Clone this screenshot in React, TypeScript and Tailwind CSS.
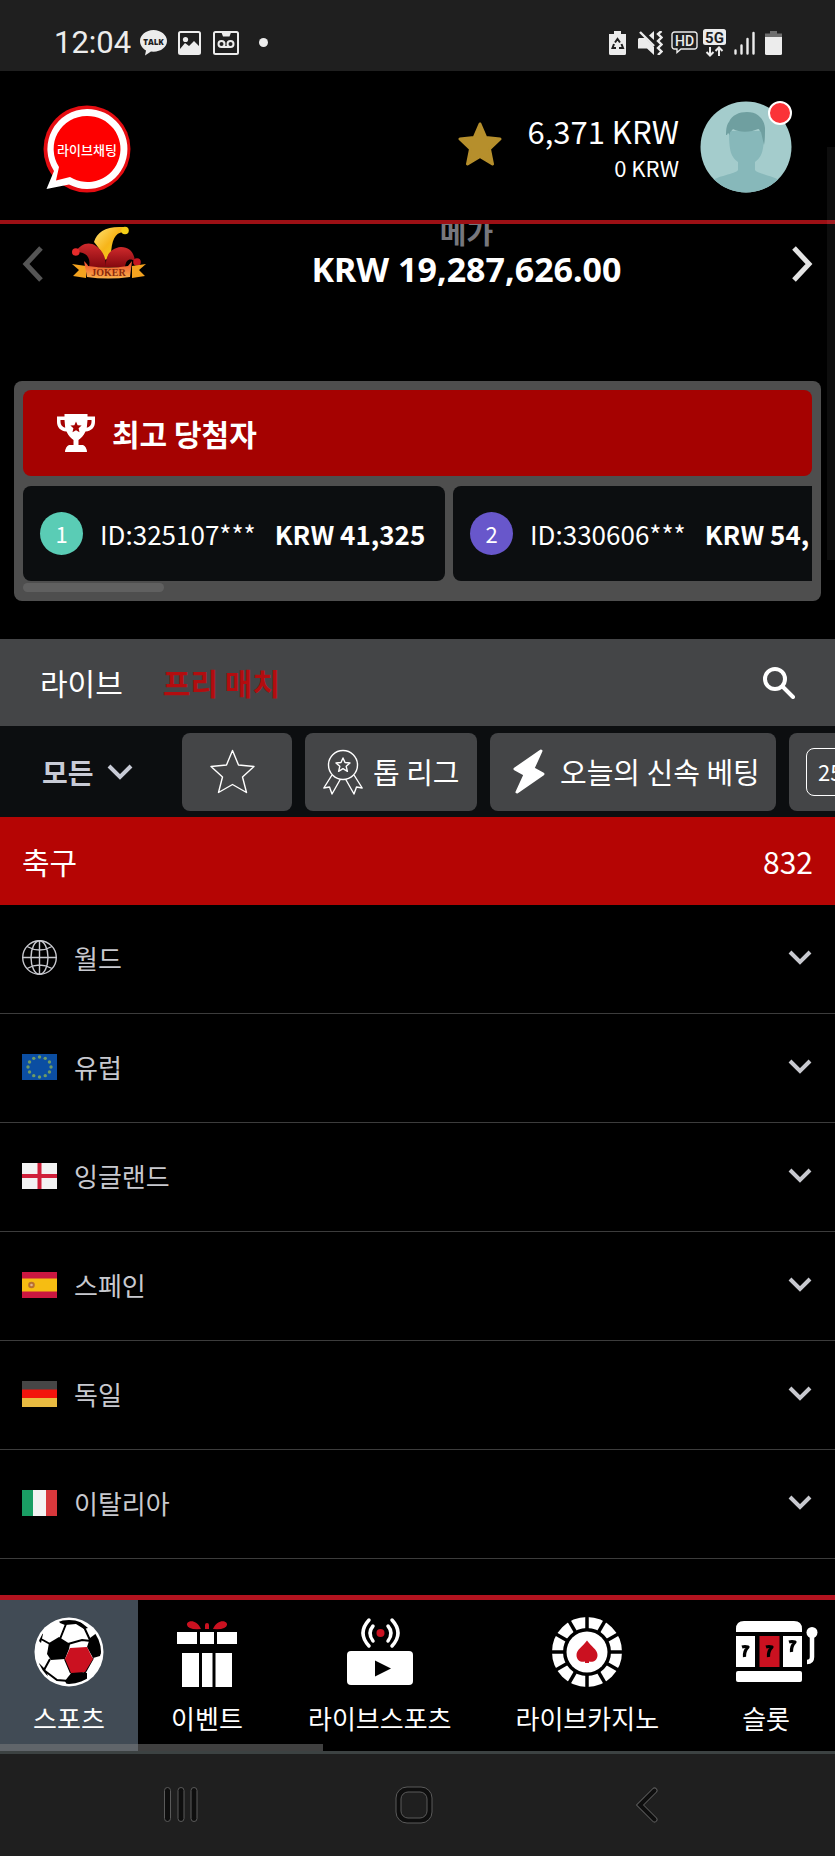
import { useState, type ReactNode } from 'react';

type Winner = { rank: number; id: string; amount: string; badge: string };

const winners: Winner[] = [
  { rank: 1, id: 'ID:325107***', amount: 'KRW 41,325', badge: 'bg-[#5accb5]' },
  { rank: 2, id: 'ID:330606***', amount: 'KRW 54,', badge: 'bg-[#6857cb]' },
];

/* ---------- Status bar ---------- */

function StatusBar() {
  return (
    <div className="flex h-[71px] shrink-0 items-center justify-between bg-[#1f1f1f] pt-[14px] pr-[53px] pl-[54px] text-[#ececec]">
      <div className="flex items-center">
        <span className="font-[Roboto,sans-serif] text-[31px] leading-8">12:04</span>
        <svg className="ml-[9px] h-[26px] w-[27px]" viewBox="0 0 27 26">
          <path d="M13.500 0C6 0 0 5 0 11c0 4 2.600 7.500 6 9.500L5 25.500l6-4 2.500.2C21 21.700 27 17 27 11S21 0 13.500 0Z" fill="#ececec" />
          <text x="13.500" y="14.500" textAnchor="middle" fontFamily="Open Sans, sans-serif" fontSize="8" fontWeight="800" fill="#1f1f1f">TALK</text>
        </svg>
        <svg className="ml-[11px] h-6 w-[23px]" viewBox="0 0 23 24">
          <rect x="1" y="1" width="21" height="22" rx="1.500" fill="none" stroke="#ececec" strokeWidth="2" />
          <circle cx="7.500" cy="8.500" r="2.600" fill="#ececec" />
          <path d="M2 18l5-6 4 3 5-5 6 6v6H2Z" fill="#ececec" />
        </svg>
        <svg className="ml-3 h-6 w-[26px]" viewBox="0 0 26 24" fill="none" stroke="#ececec" strokeWidth="2">
          <rect x="1" y="1" width="24" height="22" rx="1.500" />
          <path d="M8.500 1.500l1.500 4h6.500l1.500-4Z" fill="#ececec" stroke="none" />
          <circle cx="8.500" cy="13" r="3" />
          <circle cx="17.500" cy="13" r="3" />
          <path d="M8.500 16h9" />
        </svg>
        <span className="ml-5 size-[9px] rounded-full bg-[#ececec]" />
      </div>

      <div className="flex items-center">
        <svg className="h-6 w-[17px]" viewBox="0 0 17 24">
          <path d="M5 0h7v3h5v19.500a1.500 1.500 0 0 1-1.500 1.500h-14A1.500 1.500 0 0 1 0 22.500V3h5Z" fill="#ececec" />
          <path d="M6 11.500L8.500 8l2.500 3.500M12.500 13l1.500 4h-4M7 17H3.500l1.500-4" fill="none" stroke="#1f1f1f" strokeWidth="2" />
        </svg>
        <svg className="ml-3 h-6 w-[25px]" viewBox="0 0 25 24">
          <path d="M1 7h6l9 9v8l-7-6.500H0V8Z" fill="#ececec" />
          <path d="M2 1l14 14" stroke="#ececec" strokeWidth="2.400" />
          <path d="M11 4.500L16 0v9Z" fill="#ececec" />
          <path d="M23.500 0L20 3l3.500 3.500L20 10l3.500 3.500L20 17l3.500 3.500L20 24" fill="none" stroke="#ececec" strokeWidth="2.400" />
        </svg>
        <svg className="ml-2 h-[23px] w-[27px]" viewBox="0 0 27 23">
          <path d="M3.500 1h20a2.500 2.500 0 0 1 2.500 2.500v12a2.500 2.500 0 0 1-2.500 2.500H10l-4 3.500V18H3.500A2.500 2.500 0 0 1 1 15.500v-12A2.500 2.500 0 0 1 3.500 1Z" fill="none" stroke="#ececec" strokeWidth="1.400" />
          <text x="13.500" y="14.500" textAnchor="middle" fontFamily="Roboto, sans-serif" fontSize="14" fontWeight="500" fill="#ececec">HD</text>
        </svg>
        <svg className="ml-[5px] h-7 w-[23px]" viewBox="0 0 23 28">
          <rect width="23" height="16" rx="2.500" fill="#ececec" />
          <text x="11.500" y="13.500" textAnchor="middle" fontFamily="Roboto, sans-serif" fontSize="15" fontWeight="700" fill="#1f1f1f">5G</text>
          <path d="M7 18v8M3.500 23L7 26.500l3.500-3.500M16 27v-8M12.500 22L16 18.500l3.500 3.500" fill="none" stroke="#ececec" strokeWidth="2" />
        </svg>
        <svg className="ml-2 h-6 w-[21px]" viewBox="0 0 21 24" stroke="#ececec" strokeWidth="2.400" strokeLinecap="round">
          <path d="M1.500 19.500v3M7.500 14.500v8M13.500 8v14.500M19.500 2v20.500" />
        </svg>
        <svg className="ml-[10px] h-6 w-[17px]" viewBox="0 0 17 24">
          <path d="M5 0h7v2.500h5V6H0V2.500h5Z" fill="#6e6e6e" />
          <path d="M0 6h17v16.500a1.500 1.500 0 0 1-1.500 1.500h-14A1.500 1.500 0 0 1 0 22.500Z" fill="#ececec" />
        </svg>
      </div>
    </div>
  );
}

/* ---------- Header ---------- */

function Header() {
  return (
    <header className="flex h-[153px] shrink-0 items-center justify-between border-b-4 border-[#9c1015] px-[43px] pt-[2px]">
      <button aria-label="라이브채팅" className="mt-1">
        <svg className="size-[88px]" viewBox="0 0 88 88">
          <circle cx="44" cy="44" r="43.500" fill="#e60d12" />
          <path d="M44 4a40 40 0 1 1-18 75.500L3.500 84 11 66A40 40 0 0 1 44 4Z" fill="#fff" />
          <path d="M44 11a33 33 0 1 1-17 61l-14 3.500L16 62A33 33 0 0 1 44 11Z" fill="#fe0000" />
          <text x="44" y="50" textAnchor="middle" fontFamily="Noto Sans CJK KR, sans-serif" fontSize="13" fontWeight="500" fill="#fff">라이브채팅</text>
        </svg>
      </button>

      <div className="flex items-center">
        <button aria-label="즐겨찾기" className="mb-1.5">
          <svg className="size-11" viewBox="0 0 44 44">
            <path d="M22 2l5.800 13.500L42 17 31.500 27l3 15L22 34.500 9.500 42l3-15L2 17l14.200-1.500Z" fill="#b68f2c" stroke="#b68f2c" strokeWidth="3" strokeLinejoin="round" />
          </svg>
        </button>
        <div className="ml-[25px] text-right text-white">
          <p className="text-[31px] leading-10">6,371 KRW</p>
          <p className="text-[22px] leading-8">0 KRW</p>
        </div>
        <button aria-label="프로필" className="relative ml-[21px]">
          <svg className="size-[92px]" viewBox="0 0 92 92">
            <clipPath id="avatar">
              <circle cx="46" cy="46" r="45.500" />
            </clipPath>
            <g clipPath="url(#avatar)">
              <rect width="92" height="92" fill="#a4cccc" />
              <path d="M29 30c0 20 2 26 9 31v8c-2 4-22 6-28 12v12h72V81c-6-6-25-8-27-12v-8c7-5 9-11 9-31Z" fill="#87b8ba" />
              <path d="M26 34c0-7 1-11 3-13 3-7 10-10 18-10 11 0 17 7 18 16 0 6 0 13-1 17l-3-13c-2-1-1-3-3-3-6 3-18 4-25 0-2 3-4 3-3 6l-2-2c-1 2-1 2-2 2Z" fill="#6f9fa0" />
            </g>
          </svg>
          <span className="absolute top-0 right-0 size-6 rounded-full border-2 border-white bg-[#fb3338]" />
        </button>
      </div>
    </header>
  );
}

/* ---------- Jackpot carousel ---------- */

function JokerLogo() {
  return (
    <svg className="h-[54px] w-[74px]" viewBox="0 0 74 54">
      <defs>
        <linearGradient id="jokerGold" x1="0" y1="0" x2="1" y2="1">
          <stop offset="0" stopColor="#ffe477" />
          <stop offset=".5" stopColor="#f7b51a" />
          <stop offset="1" stopColor="#f0dc1c" />
        </linearGradient>
        <linearGradient id="jokerRed" x1="0" y1="0" x2="0" y2="1">
          <stop offset="0" stopColor="#cf2a2c" />
          <stop offset="1" stopColor="#85080f" />
        </linearGradient>
        <linearGradient id="jokerRibbon" x1="0" y1="0" x2="0" y2="1">
          <stop offset="0" stopColor="#ef4a2b" />
          <stop offset="1" stopColor="#f9b04a" />
        </linearGradient>
      </defs>
      <path d="M32 34C30 26 26 21 22 16 25 6 34 0 51 1v5c-8 1-12 8-12 26Z" fill="url(#jokerGold)" />
      <circle cx="53" cy="4.500" r="3.800" fill="#f3cf17" />
      <path d="M4 26c4-8 13-11 20-6 6 4 10 10 10 21H17c2-9-2-15-13-15Z" fill="url(#jokerRed)" />
      <path d="M34 41c-1-12 5-19 15-20 9 0 13 6 14 14-5-3-9-2-10 6Z" fill="url(#jokerRed)" />
      <circle cx="3.800" cy="26" r="3.800" fill="#e52b2b" />
      <circle cx="65" cy="36" r="3.800" fill="#c71720" />
      <path d="M0 38l14 2v12L1 50l6-6ZM74 38l-14 2v12l13-2-6-6Z" fill="#f4a31f" />
      <path d="M12 35q4 4 4 5 21 3 40 0l4-5-2 16q-22 3-43 0Z" fill="url(#jokerRibbon)" />
      <text x="36.500" y="50" textAnchor="middle" fontFamily="Liberation Serif, serif" fontSize="10" fontWeight="700" fill="#8a2a0c">JOKER</text>
    </svg>
  );
}

function Jackpot() {
  return (
    <section className="flex h-[157px] items-start px-[22px]">
      <button aria-label="이전" className="mt-[22px] text-[#555]">
        <svg className="h-9 w-[22px]" viewBox="0 0 22 36" fill="none" stroke="currentColor" strokeWidth="5">
          <path d="M19 2L4 18l15 16" />
        </svg>
      </button>
      <div className="ml-7 mt-[2px]">
        <JokerLogo />
      </div>
      <div className="-mt-[11px] flex-1 pr-1 text-center font-bold">
        <p className="text-[29px] leading-9 text-[#77777d]">메가</p>
        <p className="font-['Noto_Sans',sans-serif] text-[34px] leading-10 text-white">KRW 19,287,626.00</p>
      </div>
      <button aria-label="다음" className="mt-[22px] text-[#e4e4e4]">
        <svg className="h-9 w-[22px]" viewBox="0 0 22 36" fill="none" stroke="currentColor" strokeWidth="5">
          <path d="M3 2l15 16L3 34" />
        </svg>
      </button>
    </section>
  );
}

/* ---------- Top winners ---------- */

function TopWinners() {
  return (
    <section className="mx-[14px] rounded-lg bg-[#4e4e4e] p-[9px]">
      <h2 className="flex h-[86px] items-center rounded-lg bg-[#a50201] pl-[34px] text-[30px] font-bold text-white">
        <svg className="h-[38px] w-[38px]" viewBox="0 0 38 38">
          <path d="M7.500 0h23v2.500H38V8c0 5-3 9-9.500 9.500C26.500 22 24 24 21.500 26v5h4.500q3.500 1.500 4 7H8q.5-5.500 4-7h4.500v-5C14 24 11.500 22 9.500 17.500 3 17 0 13 0 8V2.500h7.500ZM3.500 6v2c0 3 2 5 4.700 5.700L7.500 6Zm31 0h-4l-.7 7.700C32.500 13 34.500 11 34.500 8Z" fill="#fff" fillRule="evenodd" />
          <path d="M19 7.500l1.600 3.700 4 .3-3 2.700.9 4-3.500-2-3.500 2 .9-4-3-2.700 4-.3Z" fill="#a50201" />
        </svg>
        <span className="ml-[17px]">최고 당첨자</span>
      </h2>
      <ul className="mt-[10px] flex gap-2 overflow-hidden">
        {winners.map((w) => (
          <li key={w.rank} className="flex h-[95px] w-[422px] shrink-0 items-center rounded-lg bg-[#0c0e10] pl-[17px] whitespace-nowrap text-white">
            <span className={`flex size-[43px] items-center justify-center rounded-full text-[22px] ${w.badge}`}>{w.rank}</span>
            <span className="ml-[17px] text-[26px]">{w.id}</span>
            <span className="ml-[19px] text-[26px] font-bold">{w.amount}</span>
          </li>
        ))}
      </ul>
      <div className="mt-[2px] h-[9px] w-[141px] rounded-full bg-[#606060]" />
    </section>
  );
}

/* ---------- Match tabs and filters ---------- */

function MatchTabs() {
  const [tab, setTab] = useState<'live' | 'prematch'>('prematch');
  return (
    <div className="mt-[38px] flex h-[87px] items-center bg-[#444547] pr-10 pl-10 text-[30px]">
      <button onClick={() => setTab('live')} className={tab === 'live' ? 'font-bold text-[#b30d0f]' : 'text-white'}>
        라이브
      </button>
      <button onClick={() => setTab('prematch')} className={`ml-10 ${tab === 'prematch' ? 'font-bold text-[#b30d0f]' : 'text-white'}`}>
        프리 매치
      </button>
      <button aria-label="검색" className="ml-auto">
        <svg className="size-8" viewBox="0 0 32 32" fill="none" stroke="#fff">
          <circle cx="12" cy="12" r="10" strokeWidth="4" />
          <path d="M19.500 19.500L30 30" strokeWidth="4" strokeLinecap="round" />
        </svg>
      </button>
    </div>
  );
}

function Chip({ children, className = '', label }: { children: ReactNode; className?: string; label?: string }) {
  return (
    <button aria-label={label} className={`flex h-[78px] shrink-0 items-center rounded-lg bg-[#444547] text-[29px] whitespace-nowrap text-white ${className}`}>
      {children}
    </button>
  );
}

function Filters() {
  return (
    <div className="flex h-[91px] items-center gap-[13px] overflow-hidden bg-[#0c0e10] pl-[42px]">
      <button className="flex w-[127px] shrink-0 items-center text-[28px] font-bold text-[#c8cbd6]">
        모든
        <svg className="ml-[13px] h-4 w-[26px]" viewBox="0 0 26 16" fill="none" stroke="currentColor" strokeWidth="4">
          <path d="M2 2l11 11L24 2" />
        </svg>
      </button>
      <Chip label="즐겨찾기" className="w-[110px] pl-7">
        <svg className="size-[45px]" viewBox="0 0 45 45" fill="none" stroke="#fff" strokeWidth="1.400" strokeLinejoin="round">
          <path d="M22.500 1.500l6 14.500 15.500 1.500-11.500 10.500 4 15.500-14-8-14 8 4-15.500L1 17.500 16.500 16Z" />
        </svg>
      </Chip>
      <Chip className="w-[172px] pl-[18px]">
        <svg className="h-[46px] w-10" viewBox="0 0 40 46" fill="none" stroke="#fff" strokeWidth="1.400" strokeLinejoin="round">
          <circle cx="20" cy="16" r="14.500" />
          <path d="M20 9l2 4.500 5 .5-3.800 3.300 1.200 5L20 19.700l-4.400 2.600 1.200-5L13 14l5-.5Z" />
          <path d="M9 26L.800 39l5.700-1 2.500 7 8.500-15M31 26l8.200 13-5.700-1-2.500 7-8.500-15" />
        </svg>
        <span className="ml-[10px]">톱 리그</span>
      </Chip>
      <Chip className="w-[286px] pl-[23px]">
        <svg className="h-[45px] w-8" viewBox="0 0 32 45" fill="#fff" stroke="#fff" strokeWidth="3" strokeLinejoin="round">
          <path d="M28 2L2 20l10 5.500L4 43l26-18-10-5.500Z" />
        </svg>
        <span className="ml-[15px]">오늘의 신속 베팅</span>
      </Chip>
      <Chip className="w-[180px] pl-[17px]">
        <span className="flex h-12 w-[66px] items-center rounded-lg border border-white pl-[11px] text-[22px]">25</span>
      </Chip>
    </div>
  );
}

/* ---------- Country list ---------- */

function Globe() {
  return (
    <svg className="size-[35px]" viewBox="0 0 35 35" fill="none" stroke="#c8c9cf" strokeWidth="1.400">
      <circle cx="17.500" cy="17.500" r="16.800" />
      <ellipse cx="17.500" cy="17.500" rx="8.500" ry="16.800" />
      <path d="M17.500.700v33.600M.700 17.500h33.600M5 6.500q12.500 7 25 0M5 28.500q12.500-7 25 0" />
    </svg>
  );
}

function Flag({ children }: { children: ReactNode }) {
  return (
    <svg className="h-[26px] w-[35px]" viewBox="0 0 35 26">
      {children}
    </svg>
  );
}

const euStars = Array.from({ length: 12 }, (_, i) => {
  const a = (i * Math.PI) / 6;
  return { x: 17.5 + 11.5 * Math.sin(a), y: 13 - 10 * Math.cos(a) };
});

const countries: { name: string; icon: ReactNode }[] = [
  { name: '월드', icon: <Globe /> },
  {
    name: '유럽',
    icon: (
      <Flag>
        <rect width="35" height="26" fill="#0b4ea2" />
        {euStars.map((s) => (
          <circle key={`${s.x}-${s.y}`} cx={s.x} cy={s.y} r="1.700" fill="#6f9c66" />
        ))}
      </Flag>
    ),
  },
  {
    name: '잉글랜드',
    icon: (
      <Flag>
        <rect width="35" height="26" fill="#f3f3f3" />
        <path d="M15.500 0h4v26h-4ZM0 11h35v4H0Z" fill="#d0203a" />
      </Flag>
    ),
  },
  {
    name: '스페인',
    icon: (
      <Flag>
        <rect width="35" height="26" fill="#cb1740" />
        <rect y="6.500" width="35" height="13" fill="#f6bd12" />
        <circle cx="9.500" cy="13" r="3.300" fill="#b8702f" />
        <circle cx="9.500" cy="13" r="1.300" fill="#e0b48a" />
      </Flag>
    ),
  },
  {
    name: '독일',
    icon: (
      <Flag>
        <rect width="35" height="9" fill="#464646" />
        <rect y="8.500" width="35" height="9" fill="#f3130c" />
        <rect y="17" width="35" height="9" fill="#e9bb41" />
      </Flag>
    ),
  },
  {
    name: '이탈리아',
    icon: (
      <Flag>
        <rect width="11" height="26" fill="#1a9e64" />
        <rect x="11" width="13" height="26" fill="#f3f3f3" />
        <rect x="24" width="11" height="26" fill="#d8383c" />
      </Flag>
    ),
  },
];

function CountryList() {
  return (
    <section>
      <h2 className="flex h-[88px] items-center justify-between bg-[#b50504] px-[22px] text-[30px] text-white">
        <span>축구</span>
        <span>832</span>
      </h2>
      <ul>
        {countries.map((c) => (
          <li key={c.name}>
            <button className="flex h-[109px] w-full items-center border-b border-[#3c3c3c] pr-[23px] pb-[3px] pl-[22px] text-left text-[26px] text-[#c8c9cf]">
              {c.icon}
              <span className="ml-[17px]">{c.name}</span>
              <svg className="ml-auto h-[15px] w-6" viewBox="0 0 24 15" fill="none" stroke="currentColor" strokeWidth="4">
                <path d="M2 2l10 10L22 2" />
              </svg>
            </button>
          </li>
        ))}
      </ul>
    </section>
  );
}

/* ---------- Bottom navigation ---------- */

function SoccerIcon() {
  return (
    <svg className="size-[70px]" viewBox="0 0 70 70">
      <clipPath id="ball">
        <circle cx="35" cy="35" r="32" />
      </clipPath>
      <circle cx="35" cy="35" r="34.500" fill="#fff" />
      <g clipPath="url(#ball)">
        <path d="M24 3h20l10 8-4 1-8-5-11 1-5-2Z" fill="#000" />
        <path d="M56 21l8-6 6 14-4 10-7 2-6-11Z" fill="#000" />
        <path d="M15 26l10-6 11 7-1 5-4 10-14 1-4-6Z" fill="#000" />
        <path d="M34 60l4-5h10l5 1v6l-8 6H33l-2-4Z" fill="#000" />
        <path d="M3 22l4-7 2 2-2 9ZM4 45l7 7 3 7-6-2Z" fill="#000" />
        <path d="M32 7l-6 15M7 22l9 5M16 42l-6 11M34 27l14-4 9 1M50 10l6 13M31 42l6 14M11 54l12 9 12 1M50 57l9-16" stroke="#000" strokeWidth="2" fill="none" />
      </g>
      <path d="M36 31l17-1 6 12-8 13-14 1-6-14Z" fill="#cb1120" />
    </svg>
  );
}

function GiftIcon() {
  return (
    <svg className="h-[70px] w-[60px]" viewBox="0 0 60 70" fill="#fff">
      <path d="M24 12C19 1 9 4 10 8q1 5 14 4ZM36 12C41 1 51 4 50 8q-1 5-14 4ZM28 12V8q0-2 2-2t2 2v4Z" fill="#cb1120" />
      <path d="M0 15h20v12H0ZM23 15h14v12H23ZM40 15h20v12H40ZM5 36h17v34H5ZM25 36h10.500v34H25ZM38.500 36H55v34H38.500Z" />
    </svg>
  );
}

function BroadcastIcon() {
  return (
    <svg className="h-[70px] w-[66px]" viewBox="0 0 66 70">
      <rect y="34" width="66" height="34" rx="4" fill="#fff" />
      <path d="M28 43.500l16 8-16 8Z" fill="#000" />
      <circle cx="33.500" cy="16" r="4" fill="#cb1120" />
      <path d="M26 9q-6 7 0 15M22 3q-12 13 0 26M41 9q6 7 0 15M45 3q12 13 0 26" fill="none" stroke="#fff" strokeWidth="3.500" strokeLinecap="round" />
    </svg>
  );
}

function ChipIcon() {
  const spokes = Array.from({ length: 12 }, (_, i) => i * 30);
  return (
    <svg className="size-[70px]" viewBox="0 0 70 70">
      <circle cx="35" cy="35" r="29.500" fill="none" stroke="#fff" strokeWidth="11" />
      {spokes.map((a) => (
        <path key={a} d="M35-1v14" stroke="#000" strokeWidth="3.500" transform={`rotate(${a} 35 35)`} />
      ))}
      <circle cx="35" cy="35" r="20.500" fill="#fff" />
      <path d="M35 23.500c4 6 10.500 9 10.500 14.500 0 6-5 7.500-8.500 6.500V46h-4v-1.500c-3.500 1-8.500-.5-8.500-6.500 0-5.500 6.500-8.500 10.500-14.500Z" fill="#cb1120" />
    </svg>
  );
}

function SlotIcon() {
  return (
    <svg className="h-[70px] w-[104px]" viewBox="0 0 104 70" fill="#fff">
      <path d="M22 15v-3q0-8 8-8h50q8 0 8 8v3ZM22 19h19v31H22ZM69 19h19v31H69Z" />
      <path d="M45.500 19h20v31h-20Z" fill="#cb1120" />
      <rect x="22" y="54" width="66" height="11" rx="2" />
      <circle cx="98" cy="15.500" r="5.500" />
      <path d="M98 16v24q0 5-5 5" fill="none" stroke="#fff" strokeWidth="4.500" />
      <g fill="none" stroke="#000" strokeWidth="3.200" strokeLinejoin="round">
        <path d="M28 30q3-1 6 0-4 4-3.500 10" />
        <path d="M52 30q3-1 6 0-4 4-3.500 10" />
        <path d="M75 25q3-1 6 0-4 4-3.500 10" />
      </g>
    </svg>
  );
}

const navItems = [
  { label: '스포츠', icon: SoccerIcon },
  { label: '이벤트', icon: GiftIcon },
  { label: '라이브스포츠', icon: BroadcastIcon },
  { label: '라이브카지노', icon: ChipIcon },
  { label: '슬롯', icon: SlotIcon },
];

function BottomNav() {
  const [active, setActive] = useState('스포츠');
  return (
    <nav className="relative shrink-0 border-t-[5px] border-[#b3131f] bg-black">
      <div className="flex h-[151px] overflow-hidden">
        {navItems.map((item) => {
          const Icon = item.icon;
          return (
            <button
              key={item.label}
              onClick={() => setActive(item.label)}
              className={`flex min-w-[138px] shrink-0 flex-col items-center px-8 pt-[17px] text-[26px] leading-9 whitespace-nowrap text-white last:px-[23px] ${active === item.label ? 'bg-[#414b55]' : ''}`}
            >
              <Icon />
              <span className="mt-[13px]">{item.label}</span>
            </button>
          );
        })}
      </div>
      <div className="h-[3px] bg-[#3c4242]" />
      {/* Horizontal scroll thumb */}
      <div className="absolute bottom-[3px] left-0 h-[7px] w-[323px] bg-[#808080]/50" />
    </nav>
  );
}

function SystemNav() {
  return (
    <div className="grid h-[102px] shrink-0 grid-cols-3 items-center justify-items-center bg-[#1f1f1f] pr-[71px] pl-16">
      <button aria-label="최근 앱">
        <svg className="h-9 w-[34px]" viewBox="0 0 34 36" fill="#0e0e0e" stroke="#5a5a5a">
          <rect x=".5" y=".5" width="6" height="34" rx="3" />
          <rect x="14" y=".5" width="6" height="34" rx="3" />
          <rect x="27" y=".5" width="6" height="34" rx="3" />
        </svg>
      </button>
      <button aria-label="홈">
        <svg className="size-[38px]" viewBox="0 0 38 38" stroke="#5a5a5a">
          <rect x="1" y="1" width="36" height="36" rx="11" fill="#0e0e0e" />
          <rect x="6" y="6" width="26" height="26" rx="7" fill="#1f1f1f" />
        </svg>
      </button>
      <button aria-label="뒤로">
        <svg className="h-9 w-[22px]" viewBox="0 0 22 36" fill="none" strokeLinecap="round">
          <path d="M18.500 3.500L4 18l14.500 14.500" stroke="#5a5a5a" strokeWidth="6" />
          <path d="M18.500 3.500L4 18l14.500 14.500" stroke="#0e0e0e" strokeWidth="4" />
        </svg>
      </button>
    </div>
  );
}

export default function App() {
  return (
    <div className="relative flex h-screen flex-col overflow-hidden bg-black font-['Noto_Sans_CJK_KR',sans-serif]">
      <StatusBar />
      <Header />
      <main className="flex-1 overflow-hidden">
        <Jackpot />
        <TopWinners />
        <MatchTabs />
        <Filters />
        <CountryList />
      </main>
      <BottomNav />
      <SystemNav />
      {/* Page scroll thumb */}
      <div className="absolute top-[147px] right-0 h-[413px] w-2 bg-white/5" />
    </div>
  );
}
